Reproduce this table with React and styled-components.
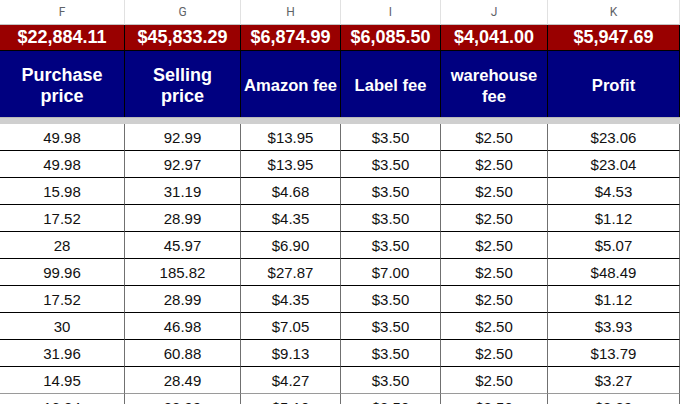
import React from "react"
import styled, { createGlobalStyle } from "styled-components"

const GlobalStyle = createGlobalStyle`
  html, body {
    margin: 0;
    padding: 0;
    background: #ffffff;
    overflow: hidden;
  }
  body {
    font-family: "Liberation Sans", Arial, sans-serif;
  }
`

const COLS = "125px 116px 100px 100px 107px 1fr"

const Sheet = styled.div`
  width: 680px;
  height: 404px;
  overflow: hidden;
  background: #ffffff;
`

const Row = styled.div`
  display: grid;
  grid-template-columns: ${COLS};
`

const LetterCell = styled.div`
  box-sizing: border-box;
  height: 25px;
  display: flex;
  align-items: center;
  justify-content: center;
  font-family: Roboto, "Liberation Sans", Arial, sans-serif;
  font-size: 12px;
  color: #5f6368;
  border-right: 1px solid #e1e1e1;
  border-bottom: 1px solid #c4c4c4;
`

const TotalCell = styled.div`
  box-sizing: border-box;
  height: 26px;
  display: flex;
  align-items: center;
  justify-content: center;
  background: #990000;
  color: #ffffff;
  font-weight: bold;
  font-size: 18px;
  border-right: 1px solid #000000;
  border-bottom: 1px solid #000000;
`

const HeadCell = styled.div`
  box-sizing: border-box;
  height: 66px;
  display: flex;
  align-items: center;
  justify-content: center;
  text-align: center;
  white-space: nowrap;
  overflow: hidden;
  background: #000080;
  color: #ffffff;
  font-weight: bold;
  font-size: ${(p) => (p.$big ? "18px" : "16.6px")};
  line-height: 21px;
  padding-top: 3px;
  border-right: 1px solid #000000;
`

const FrozenBar = styled.div`
  height: 7px;
  background: #cfcfcf;
  border-top: 1px solid #b8b8b8;
  box-sizing: border-box;
`

const DataCell = styled.div`
  box-sizing: border-box;
  height: 27px;
  display: flex;
  align-items: center;
  justify-content: center;
  font-size: 15px;
  color: #111111;
  border-right: 1px solid #707070;
  border-bottom: 1px solid ${(p) => (p.$soft ? "#9a9a9a" : "#000000")};
`

const letters = ["F", "G", "H", "I", "J", "K"]

const totals = [
  "$22,884.11",
  "$45,833.29",
  "$6,874.99",
  "$6,085.50",
  "$4,041.00",
  "$5,947.69",
]

const headers = [
  { lines: ["Purchase", "price"], big: true },
  { lines: ["Selling", "price"], big: true },
  { lines: ["Amazon fee"] },
  { lines: ["Label fee"] },
  { lines: ["warehouse", "fee"] },
  { lines: ["Profit"] },
]

const rows = [
  ["49.98", "92.99", "$13.95", "$3.50", "$2.50", "$23.06"],
  ["49.98", "92.97", "$13.95", "$3.50", "$2.50", "$23.04"],
  ["15.98", "31.19", "$4.68", "$3.50", "$2.50", "$4.53"],
  ["17.52", "28.99", "$4.35", "$3.50", "$2.50", "$1.12"],
  ["28", "45.97", "$6.90", "$3.50", "$2.50", "$5.07"],
  ["99.96", "185.82", "$27.87", "$7.00", "$2.50", "$48.49"],
  ["17.52", "28.99", "$4.35", "$3.50", "$2.50", "$1.12"],
  ["30", "46.98", "$7.05", "$3.50", "$2.50", "$3.93"],
  ["31.96", "60.88", "$9.13", "$3.50", "$2.50", "$13.79"],
  ["14.95", "28.49", "$4.27", "$3.50", "$2.50", "$3.27"],
  ["16.84", "33.99", "$5.10", "$3.50", "$2.50", "$8.89"],
]

const App = () => {
  return (
    <Sheet>
      <GlobalStyle />
      <Row>
        {letters.map((l) => (
          <LetterCell key={l}>{l}</LetterCell>
        ))}
      </Row>
      <Row>
        {totals.map((t) => (
          <TotalCell key={t}>{t}</TotalCell>
        ))}
      </Row>
      <Row>
        {headers.map((h) => (
          <HeadCell key={h.lines.join(" ")} $big={h.big}>
            <div>
              {h.lines.map((line) => (
                <div key={line}>{line}</div>
              ))}
            </div>
          </HeadCell>
        ))}
      </Row>
      <FrozenBar />
      {rows.map((r, i) => (
        <Row key={i}>
          {r.map((v, j) => (
            <DataCell key={j} $soft={i >= rows.length - 2}>
              {v}
            </DataCell>
          ))}
        </Row>
      ))}
    </Sheet>
  )
}

export default App
